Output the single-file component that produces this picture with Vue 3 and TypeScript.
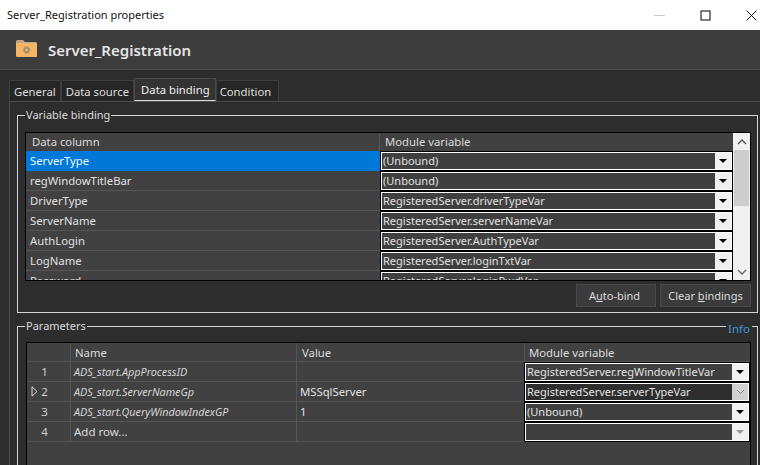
<script setup lang="ts">
const bindings: { col: string; mod: string; sel?: boolean }[] = [
  { col: 'ServerType', mod: '(Unbound)', sel: true },
  { col: 'regWindowTitleBar', mod: '(Unbound)' },
  { col: 'DriverType', mod: 'RegisteredServer.driverTypeVar' },
  { col: 'ServerName', mod: 'RegisteredServer.serverNameVar' },
  { col: 'AuthLogin', mod: 'RegisteredServer.AuthTypeVar' },
  { col: 'LogName', mod: 'RegisteredServer.loginTxtVar' },
  { col: 'Password', mod: 'RegisteredServer.loginPwdVar' },
]
const params: { n: number; name: string; value: string; mod: string; cur?: boolean; add?: boolean }[] = [
  { n: 1, name: 'ADS_start.AppProcessID', value: '', mod: 'RegisteredServer.regWindowTitleVar' },
  { n: 2, name: 'ADS_start.ServerNameGp', value: 'MSSqlServer', mod: 'RegisteredServer.serverTypeVar', cur: true },
  { n: 3, name: 'ADS_start.QueryWindowIndexGP', value: '1', mod: '(Unbound)' },
  { n: 4, name: 'Add row...', value: '', mod: '', add: true },
]
const tabs = ['General', 'Data source', 'Data binding', 'Condition']
</script>

<template>
  <div class="win">
    <div class="titlebar">
      <span class="wtitle">Server_Registration properties</span>
      <div class="caps">
        <svg width="12" height="12" viewBox="0 0 12 12"><path d="M1 6.500h11" stroke="#c8c8c8" /></svg>
        <svg width="11" height="11" viewBox="0 0 11 11"><rect x="1" y="1" width="9" height="9" fill="none" stroke="#000" /></svg>
        <svg width="11" height="11" viewBox="0 0 11 11"><path d="M.7.7l9.600 9.600M10.300.7L.7 10.300" stroke="#111" fill="none" /></svg>
      </div>
    </div>
    <div class="head">
      <svg class="folder" width="21" height="17" viewBox="0 0 21 17">
        <path d="M0 3V1.500Q0 0 1.500 0H7l2 2h10.500Q21 2 21 3.500V4H0z" fill="#bfa888" />
        <rect x="0" y="3" width="21" height="14" rx="1" fill="#f4b664" />
        <circle cx="10.500" cy="10" r="2.200" fill="none" stroke="#9a8a72" stroke-width="1.500" />
        <circle cx="10.500" cy="10" r="3.400" fill="none" stroke="#9a8a72" stroke-width="1" stroke-dasharray="1.300 1.300" />
      </svg>
      <span class="htitle">Server_Registration</span>
    </div>
    <div class="body">
      <div class="tabs">
        <div v-for="t in tabs" :key="t" class="tab" :class="{ active: t === 'Data binding' }">{{ t }}</div>
      </div>
      <div class="pane">
        <fieldset class="fs fs1">
          <legend>Variable binding</legend>
          <div class="grid g1">
            <div class="g1main">
              <div class="g1row hdr">
                <div class="c hc first">Data column</div>
                <div class="c hc second">Module variable</div>
              </div>
              <div v-for="b in bindings" :key="b.col" class="g1row">
                <div class="c col" :class="{ sel: b.sel }">{{ b.col }}</div>
                <div class="combo">
                  <span class="ctext">{{ b.mod }}</span>
                  <span class="cbtn"><i class="tri"></i></span>
                </div>
              </div>
            </div>
            <div class="sb">
              <div class="sbbtn"><svg width="10" height="6" viewBox="0 0 10 6"><path d="M1 5l4-4 4 4" fill="none" stroke="#555" stroke-width="1.300" /></svg></div>
              <div class="thumb"></div>
              <div class="track"></div>
              <div class="sbbtn"><svg width="10" height="6" viewBox="0 0 10 6"><path d="M1 1l4 4 4-4" fill="none" stroke="#666" stroke-width="1.300" /></svg></div>
            </div>
          </div>
          <div class="btns">
            <button class="btn ab">A<u>u</u>to-bind</button>
            <button class="btn cb">Clear <u>b</u>indings</button>
          </div>
        </fieldset>
        <fieldset class="fs fs2">
          <legend>Parameters</legend>
          <span class="info">Info</span>
          <div class="grid g2">
            <div class="g2row hdr">
              <div class="c hc"></div>
              <div class="c hc nm">Name</div>
              <div class="c hc vl">Value</div>
              <div class="c hc mv">Module variable</div>
            </div>
            <div v-for="p in params" :key="p.n" class="g2row">
              <div class="c rh">
                <svg v-if="p.cur" class="arrow" width="7" height="11" viewBox="0 0 7 11"><path d="M1 .8l5 4.700L1 10.200z" fill="none" stroke="#ddd" /></svg>
                <span>{{ p.n }}</span>
              </div>
              <div class="c pn" :class="{ add: p.add }">{{ p.name }}</div>
              <div class="c pv">{{ p.value }}</div>
              <div class="combo p" :class="{ focus: p.cur, dis: p.add }">
                <span class="ctext">{{ p.mod }}</span>
                <span class="cbtn">
                  <svg v-if="p.cur" width="9" height="6" viewBox="0 0 9 6"><path d="M1 1l3.500 3.500L8 1" fill="none" stroke="#888" /></svg>
                  <i v-else class="tri"></i>
                </span>
              </div>
            </div>
          </div>
        </fieldset>
      </div>
    </div>
  </div>
</template>

<style>
html, body { margin: 0; background: #2d2d2d; overflow: hidden; }
</style>

<style scoped>
.win { width: 760px; height: 465px; overflow: hidden; display: flex; flex-direction: column; background: #2d2d2d; font: 11px/16px "Noto Sans", sans-serif; color: #e0e0e0; }
.titlebar { height: 30px; flex: none; background: #fff; color: #111; display: flex; align-items: center; justify-content: space-between; padding-left: 7px; box-sizing: border-box; }
.caps { display: flex; align-items: center; gap: 35px; padding-right: 3px; }
.head { height: 40px; flex: none; box-sizing: border-box; background: #3c3c3c; border-bottom: 1px solid #4a4a4a; display: flex; align-items: center; padding-left: 16px; gap: 11px; }
.htitle { font-size: 15px; font-weight: 600; color: #e4e4e4; }
.folder { flex: none; margin-top: -3px; }
.body { flex: 1; min-height: 0; padding: 8px 0 0 9px; }
.tabs { display: flex; align-items: flex-end; height: 23px; }
.tab { height: 21px; box-sizing: border-box; padding: 3px 4px 0; border: 1px solid #3e3e3e; border-bottom: 0; background: #262626; color: #dedede; font-size: 11.300px; }
.tab:last-child { padding-right: 7px; padding-left: 3px; }
.tab.active { height: 23px; background: #333; border-color: #4a4a4a; border-bottom: 1px solid #ddd; padding: 3px 5px 0 6px; color: #eee; }
.pane { border-top: 1px solid #4c4c4c; border-left: 1px solid #4c4c4c; padding: 5px 0 0 7px; }
.fs { margin: 0; padding: 0 6px 0 7px; border: 1px solid #d6d6d6; position: relative; box-sizing: border-box; width: 741px; min-width: 0; }
.fs legend { margin-left: 0; padding: 0 1px; line-height: 16px; color: #dcdcdc; font-size: 11px; }
.fs1 { height: 206px; padding-top: 9px; }
.fs2 { margin-top: 5px; height: 160px; padding-top: 8px; padding-left: 8px; }
.fs2 legend { margin-left: -1px; }
.info { position: absolute; right: 5px; top: -14px; color: #3f97d8; padding: 0 2px; background: #2d2d2d; line-height: 18px; font-size: 11.500px; }
.grid { border: 1px solid #000; background: #414141; box-sizing: border-box; overflow: hidden; }
.g1 { height: 149px; display: flex; }
.g1main { flex: 1; min-width: 0; overflow: hidden; }
.g1row { display: grid; grid-template-columns: 354px 1fr; height: 20px; box-sizing: border-box; border-bottom: 1px solid #555; }
.g1row.hdr { height: 18px; border-bottom: 0; }
.c { white-space: nowrap; overflow: hidden; line-height: 19px; padding-left: 4px; font-size: 11.300px; }
.hc { color: #dcdcdc; line-height: 18px; border-right: 1px solid #555; }
.first { padding-left: 6px; }
.second { padding-left: 5px; border-right: 0; }
.col.sel { background: #0078d7; color: #f0f8ff; }
.combo { display: flex; border: 1px solid #fff; outline: 1px solid #000; margin: 1px; height: 18px; box-sizing: border-box; background: #3f3f3f; }
.ctext { flex: 1; padding-left: 1px; line-height: 16px; white-space: nowrap; overflow: hidden; color: #e2e2e2; }
.cbtn { width: 16px; flex: none; background: #f0f0f0; display: flex; align-items: center; justify-content: center; }
.tri { width: 0; height: 0; border: 4px solid transparent; border-top: 4px solid #000; border-bottom: 0; }
.sb { width: 17px; flex: none; display: flex; flex-direction: column; background: #f0f0f0; }
.sbbtn { height: 17px; flex: none; background: #f0f0f0; display: flex; align-items: center; justify-content: center; }
.thumb { height: 56px; flex: none; background: #cdcdcd; margin: 0 1px; }
.track { flex: 1; }
.btns { display: flex; justify-content: flex-end; gap: 4px; margin-top: 3px; }
.btn { height: 23px; box-sizing: border-box; border: 1px solid #4a4a4a; background: #3b3b3b; color: #dcdcdc; font: inherit; padding: 0; }
.ab { width: 80px; padding-right: 3px; }
.cb { width: 91px; }
.g2 { height: 130px; }
.g2row { display: grid; grid-template-columns: 44px 226px 228px 1fr; height: 20px; box-sizing: border-box; border-bottom: 1px solid #555; }
.g2row.hdr { height: 19px; }
.g2row .hc { line-height: 19px; }
.nm { padding-left: 4px; }
.vl { padding-left: 5px; }
.mv { padding-left: 4px; border-right: 0; }
.rh { border-right: 1px solid #555; display: flex; justify-content: center; padding: 0 8px 0 0; position: relative; color: #cfcfcf; font-size: 11.500px; }
.arrow { position: absolute; left: 4px; top: 4px; }
.pn { border-right: 1px solid #555; font-style: italic; font-size: 10.800px; padding-left: 3px; color: #d4d4d4; }
.pn.add { font-style: normal; font-size: 11.500px; color: #dcdcdc; }
.pv { border-right: 1px solid #555; padding-left: 3px; }
.combo.p { margin-left: 0; }
.combo.focus { background: #2e2e2e; }
.combo.focus .cbtn { background: #d0d0d0; }
.combo.dis .tri { border-top-color: #9a9a9a; }
</style>
